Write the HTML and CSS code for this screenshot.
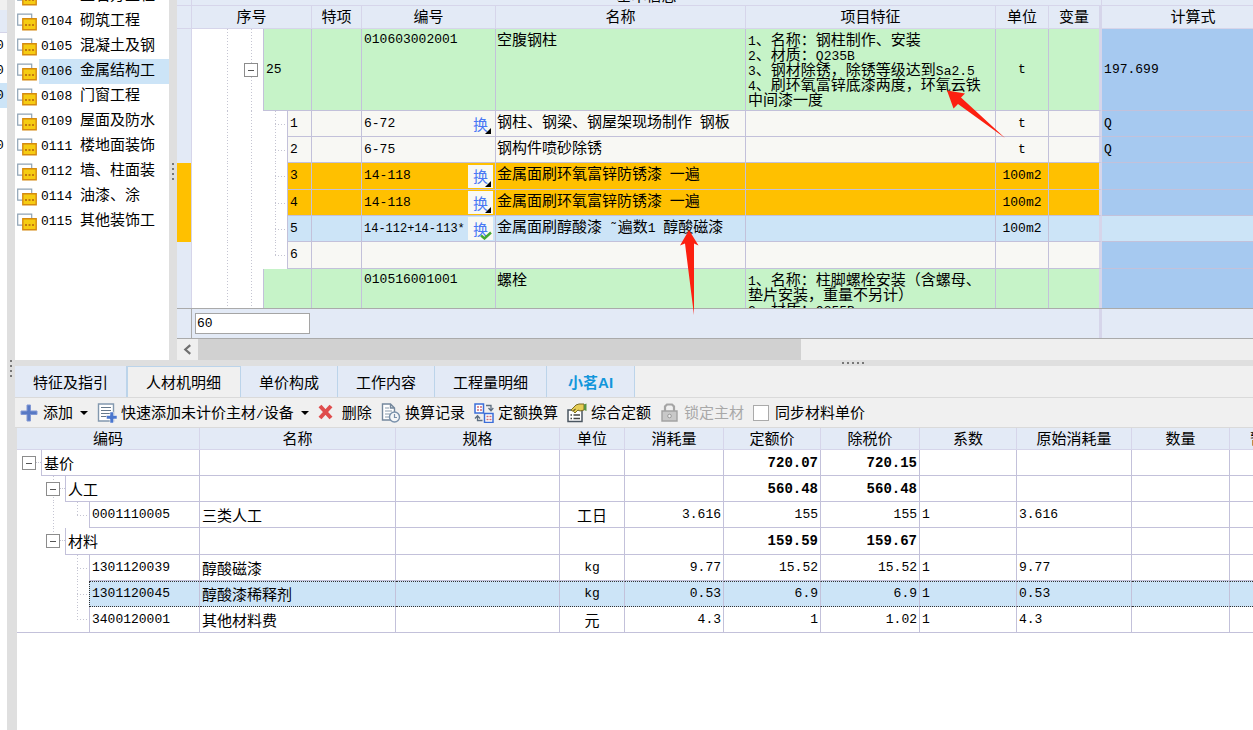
FILE: index.html
```html
<!DOCTYPE html>
<html lang="zh-CN">
<head>
<meta charset="utf-8">
<title>工程计价</title>
<link rel="stylesheet" href="styles.css">
</head>
<body>
<svg class="defs" aria-hidden="true">
  <symbol id="folder" viewBox="0 0 20 18">
    <path d="M.7 1.2h14v11h-14z" fill="#fff" stroke="#8fa3b5" stroke-width="1.2"/>
    <path d="M5.8 5.8h13.4v11H5.8z" fill="#f6cc12" stroke="#d58a10" stroke-width="1.4"/>
    <path d="M8 11h2v2H8zM11.500 11h2v2h-2zM15 11h2v2h-2z" fill="#c47a10"/>
  </symbol>
</svg>
<aside class="strip">
  <div class="strip-head"></div>
  <div class="strip-row">0</div>
  <div class="strip-row">0</div>
  <div class="strip-row on">0</div>
  <div class="strip-row"></div>
  <div class="strip-row">0</div>
</aside>
<div class="vsplit outer"><i></i><i></i><i></i><i></i></div>
<main class="main">
  <section class="top">
    <nav class="side">
      <ul>
        <li><svg><use href="#folder"/></svg><span><b>0101 </b>土石方工程</span></li>
        <li><svg><use href="#folder"/></svg><span><b>0104 </b>砌筑工程</span></li>
        <li><svg><use href="#folder"/></svg><span><b>0105 </b>混凝土及钢</span></li>
        <li class="on"><svg><use href="#folder"/></svg><span><b>0106 </b>金属结构工</span></li>
        <li><svg><use href="#folder"/></svg><span><b>0108 </b>门窗工程</span></li>
        <li><svg><use href="#folder"/></svg><span><b>0109 </b>屋面及防水</span></li>
        <li><svg><use href="#folder"/></svg><span><b>0111 </b>楼地面装饰</span></li>
        <li><svg><use href="#folder"/></svg><span><b>0112 </b>墙、柱面装</span></li>
        <li><svg><use href="#folder"/></svg><span><b>0114 </b>油漆、涂</span></li>
        <li><svg><use href="#folder"/></svg><span><b>0115 </b>其他装饰工</span></li>
      </ul>
    </nav>
    <div class="vsplit"><i></i><i></i><i></i><i></i></div>
    <div class="grid">
      <div class="grid-view">
        <table class="items">
          <colgroup><col class="c-ind"><col class="c-no"><col class="c-sp"><col class="c-code"><col class="c-name"><col class="c-feat"><col class="c-unit"><col class="c-var"><col class="c-calc"></colgroup>
          <thead>
            <tr class="group"><th></th><th colspan="7"><span>基本信息</span></th><th></th></tr>
            <tr><th></th><th>序号</th><th>特项</th><th>编号</th><th>名称</th><th>项目特征</th><th>单位</th><th>变量</th><th>计算式</th></tr>
          </thead>
          <tbody>
            <tr class="parent">
              <td class="ind"></td>
              <td class="tree"><div><i class="g1"></i><i class="g2"><button class="toggle" aria-label="折叠"></button></i><span class="no">25</span></div></td>
              <td></td><td class="code">010603002001</td><td class="name">空腹钢柱</td>
              <td class="feat"><b>1</b>、名称：钢柱制作、安装<br><b>2</b>、材质：<b>Q235B</b><br><b>3</b>、钢材除锈，除锈等级达到<b>Sa2.5</b><br><b>4</b>、刷环氧富锌底漆两度，环氧云铁中间漆一度</td>
              <td class="unit">t</td><td></td><td class="calc">197.699</td>
            </tr>
            <tr>
              <td class="ind"></td><td class="tree"><div><i class="g1"></i><i class="g2"></i><i class="g3"></i><span class="no">1</span></div></td>
              <td></td><td class="code"><div><span>6-72</span><button class="swap">换</button></div></td><td class="name">钢柱、钢梁、钢屋架现场制作<b> </b>钢板</td><td></td><td class="unit">t</td><td></td><td class="calc">Q</td>
            </tr>
            <tr>
              <td class="ind"></td><td class="tree"><div><i class="g1"></i><i class="g2"></i><i class="g3"></i><span class="no">2</span></div></td>
              <td></td><td class="code"><div><span>6-75</span></div></td><td class="name">钢构件喷砂除锈</td><td></td><td class="unit">t</td><td></td><td class="calc">Q</td>
            </tr>
            <tr class="gold">
              <td class="ind"></td><td class="tree"><div><i class="g1"></i><i class="g2"></i><i class="g3"></i><span class="no">3</span></div></td>
              <td></td><td class="code"><div><span>14-118</span><button class="swap">换</button></div></td><td class="name">金属面刷环氧富锌防锈漆<b> </b>一遍</td><td></td><td class="unit">100m2</td><td></td><td class="calc"></td>
            </tr>
            <tr class="gold">
              <td class="ind"></td><td class="tree"><div><i class="g1"></i><i class="g2"></i><i class="g3"></i><span class="no">4</span></div></td>
              <td></td><td class="code"><div><span>14-118</span><button class="swap">换</button></div></td><td class="name">金属面刷环氧富锌防锈漆<b> </b>一遍</td><td></td><td class="unit">100m2</td><td></td><td class="calc"></td>
            </tr>
            <tr class="picked">
              <td class="ind mark"></td><td class="tree"><div><i class="g1"></i><i class="g2"></i><i class="g3"></i><span class="no">5</span></div></td>
              <td></td><td class="code"><div><span class="long">14-112+14-113*</span><button class="swap done">换<svg viewBox="0 0 12 9"><path d="M1 4.500l3.500 3L11 1.500" fill="none" stroke="#45a832" stroke-width="2.400"/></svg></button></div></td><td class="name">金属面刷醇酸漆<b> ˜</b>遍数<b>1 </b>醇酸磁漆</td><td></td><td class="unit">100m2</td><td></td><td class="calc"></td>
            </tr>
            <tr>
              <td class="ind"></td><td class="tree"><div><i class="g1"></i><i class="g2"></i><i class="g3 end"></i><span class="no">6</span></div></td>
              <td></td><td></td><td></td><td></td><td></td><td></td><td class="calc"></td>
            </tr>
            <tr class="parent">
              <td class="ind"></td>
              <td class="tree"><div><i class="g1"></i><i class="g2"></i><span class="no"></span></div></td>
              <td></td><td class="code">010516001001</td><td class="name">螺栓</td>
              <td class="feat"><b>1</b>、名称：柱脚螺栓安装（含螺母、垫片安装，重量不另计）<br><b>2</b>、材质：<b>Q355B</b></td>
              <td></td><td></td><td class="calc"></td>
            </tr>
          </tbody>
        </table>
      </div>
      <div class="summary"><div class="sum-ind"></div><div class="sum-main"><input type="text" value="60" aria-label="合计"></div><div class="sum-rest"></div></div>
      <div class="hbar"><button aria-label="向左滚动"><svg viewBox="0 0 10 10"><path d="M7.500 1L3 5l4.500 4" fill="none" stroke="#707070" stroke-width="2"/></svg></button><div class="thumb"></div></div>
    </div>
    <svg class="arrows" viewBox="0 0 1238 360" aria-hidden="true">
      <path d="M932 90.500L950 93.500L946 97.500L990 138L943 104L938.500 108.500z" fill="#fc2010"/>
      <path d="M674 230L683.500 245.500L679 243.500V315L670 243.500L665 245.500z" fill="#fc2010"/>
    </svg>
  </section>
  <div class="hsplit"><i></i><i></i><i></i><i></i><i></i></div>
  <section class="bottom">
    <div class="tabs" role="tablist">
      <button role="tab">特征及指引</button><button role="tab" class="on" aria-selected="true">人材机明细</button><button role="tab">单价构成</button><button role="tab">工作内容</button><button role="tab">工程量明细</button><button role="tab" class="ai">小茗AI</button>
    </div>
    <div class="tools">
      <button class="drop"><svg viewBox="0 0 20 20"><path d="M8 2h3.500v6H18v3.500h-6.500V18H8v-6.500H2V8h6z" fill="#5778c4" stroke="#8298d4"/></svg>添加</button>
      <button class="drop"><svg viewBox="0 0 20 20"><path d="M1.500 1h15v17h-15z" fill="#fff" stroke="#8298ae" stroke-width="1.400"/><path d="M4 4.500h10M4 7.500h10M4 10.500h9M4 13.500h6" stroke="#66798c" stroke-width="1.200"/><path d="M13 9h3.500v3.500H20V16h-3.500v4H13v-4H9.500v-3.500H13z" fill="#4a76ce" stroke="#fff" stroke-width=".5"/></svg><span>快速添加未计价主材<b>/</b>设备</span></button>
      <button><svg viewBox="0 0 20 20"><path d="M2 3l11 12M13 3L2 15" stroke="#df4d4d" stroke-width="4"/></svg>删除</button>
      <button><svg viewBox="0 0 20 20"><path d="M10 17H1.500V1h8l4 4v4M9.500 1v4h4" fill="#fff" stroke="#74889d" stroke-width="1.400"/><path d="M4 5h4M4 8h7M4 11h5M4 14h4" stroke="#8a9bac" stroke-width="1.200"/><circle cx="13.500" cy="14" r="5" fill="#f4f6f8" stroke="#7890aa" stroke-width="1.400"/><path d="M13.500 11v3.500H16" fill="none" stroke="#7890aa" stroke-width="1.200"/></svg>换算记录</button>
      <button><svg viewBox="0 0 20 20"><path d="M1 1h8.500v9H1zM10.500 10.500H19v9h-8.500z" fill="#fff" stroke="#3b6dd8" stroke-width="1.500"/><path d="M3 4h2M6 4h2M3 7h2M6 7h2M12.500 13.500h2m1 0h2m-5 3h2m1 0h2" stroke="#d06b75" stroke-width="1.300"/><path d="M12 2.500h5V7M14.500 5L17 7.800 19.300 5M8.500 17.500h-5v-4M1 15.500l2.500-2.800L6 15.500" fill="none" stroke="#5d6e80" stroke-width="1.300"/></svg>定额换算</button>
      <button><svg viewBox="0 0 20 20"><path d="M1 7h14v11.500H1z" fill="#fff" stroke="#4a5560" stroke-width="1.500"/><path d="M3.500 12H5M3.500 15.500H5M6.500 12H13M6.500 15.500H13" stroke="#444" stroke-width="1.300"/><path d="M4 7l5-5 3-1h5v6l-4 1-2-1-3 3-1.500-1.500 2-2.500-3 2z" fill="#e6cd55" stroke="#7b6d24"/><path d="M17 1.500l2.500-1V8L17 7z" fill="#5a9440"/></svg>综合定额</button>
      <button disabled><svg viewBox="0 0 20 20"><path d="M5 9V3.500L7 1.500h5l2 2V9" fill="none" stroke="#a5a5a5" stroke-width="2.200"/><path d="M2 8h15v10H2z" fill="#c8c8c8" stroke="#a2a2a2" stroke-width="1.400"/><circle cx="9.500" cy="13" r="1.800" fill="#eee" stroke="#999"/></svg>锁定主材</button>
      <label><input type="checkbox">同步材料单价</label>
    </div>
    <div class="detail-view">
      <table class="detail">
        <colgroup><col class="d1"><col class="d2"><col class="d3"><col class="d4"><col class="d5"><col class="d6"><col class="d7"><col class="d8"><col class="d9"><col class="d10"><col class="d11"></colgroup>
        <thead><tr><th>编码</th><th>名称</th><th>规格</th><th>单位</th><th>消耗量</th><th>定额价</th><th>除税价</th><th>系数</th><th>原始消耗量</th><th>数量</th><th>暂估</th></tr></thead>
        <tbody>
          <tr class="sum"><td class="tree"><div><i class="t1"><button class="toggle" aria-label="折叠"></button></i><span class="no zh">基价</span></div></td><td></td><td></td><td></td><td></td><td class="r">720.07</td><td class="r">720.15</td><td></td><td></td><td></td><td></td></tr>
          <tr class="sum"><td class="tree"><div><i class="t0"></i><i class="t1 line"><button class="toggle" aria-label="折叠"></button></i><span class="no zh">人工</span></div></td><td></td><td></td><td></td><td></td><td class="r">560.48</td><td class="r">560.48</td><td></td><td></td><td></td><td></td></tr>
          <tr><td class="tree"><div><i class="t2 cont"></i><i class="g3 end"></i><span class="no">0001110005</span></div></td><td class="zh">三类人工</td><td></td><td class="unit zh">工日</td><td class="r">3.616</td><td class="r">155</td><td class="r">155</td><td>1</td><td>3.616</td><td></td><td></td></tr>
          <tr class="sum"><td class="tree"><div><i class="t0"></i><i class="t1 line half"><button class="toggle" aria-label="折叠"></button></i><span class="no zh">材料</span></div></td><td></td><td></td><td></td><td></td><td class="r">159.59</td><td class="r">159.67</td><td></td><td></td><td></td><td></td></tr>
          <tr><td class="tree"><div><i class="t2"></i><i class="g3"></i><span class="no">1301120039</span></div></td><td class="zh">醇酸磁漆</td><td></td><td class="unit">kg</td><td class="r">9.77</td><td class="r">15.52</td><td class="r">15.52</td><td>1</td><td>9.77</td><td></td><td></td></tr>
          <tr class="picked"><td class="tree"><div><i class="t2"></i><i class="g3"></i><span class="no">1301120045</span></div></td><td class="zh">醇酸漆稀释剂</td><td></td><td class="unit">kg</td><td class="r">0.53</td><td class="r">6.9</td><td class="r">6.9</td><td>1</td><td>0.53</td><td></td><td></td></tr>
          <tr class="last"><td class="tree"><div><i class="t2"></i><i class="g3 end"></i><span class="no">3400120001</span></div></td><td class="zh">其他材料费</td><td></td><td class="unit zh">元</td><td class="r">4.3</td><td class="r">1</td><td class="r">1.02</td><td>1</td><td>4.3</td><td></td><td></td></tr>
        </tbody>
      </table>
    </div>
  </section>
</main>
</body>
</html>
```
FILE: styles.css
```css
* { box-sizing: border-box; }
body { margin: 0; height: 100vh; display: flex; overflow: hidden; background: #fff; color: #000; font: 15px/18px "Liberation Sans", "Noto Sans CJK SC", sans-serif; }
button { font: inherit; color: inherit; border: 0; margin: 0; padding: 0; background: none; }
b { font-family: "Liberation Mono", monospace; font-size: 13px; font-weight: 400; white-space: pre; line-height: 1px; }
svg { flex: none; display: block; }
.defs { display: none; }

/* left edge of the project list */
.strip { flex: 0 0 7px; overflow: hidden; font: 13px/25px "Liberation Mono", monospace; }
.strip-head { height: 33px; border-top: 10px solid #f0f0f0; background: #e3eaf6; border-bottom: 1px solid #d4d4e8; }
.strip-row { height: 25px; text-indent: -4px; }
.strip-row.on { background: #cce4f7; }

/* splitters */
.vsplit { flex: 0 0 8px; background: #dfdfdf; display: flex; flex-direction: column; align-items: center; gap: 3px; padding-top: 163px; }
.vsplit.outer { padding-top: 360px; }
.vsplit i, .hsplit i { width: 2px; height: 2px; background: #777; }
.hsplit { flex: 0 0 6px; background: #dfdfdf; display: flex; justify-content: center; align-items: center; gap: 3px; padding-left: 438px; }

.main { flex: 1; min-width: 0; display: flex; flex-direction: column; }
.top { position: relative; flex: 0 0 360px; display: flex; overflow: hidden; }
.arrows { position: absolute; left: 0; top: 0; width: 1238px; height: 360px; pointer-events: none; }

/* chapter list */
.side { flex: 0 0 154px; overflow: hidden; }
.side ul { list-style: none; margin: -16px 0 0; padding: 0; }
.side li { height: 25px; display: flex; align-items: center; gap: 2px; padding-left: 2px; }
.side li svg { width: 20px; height: 18px; }
.side li span { flex: 1; height: 25px; line-height: 22px; padding-left: 2px; white-space: nowrap; }
.side li.on span { background: #cce4f7; }

/* item grid */
.grid { flex: 1; min-width: 0; display: flex; flex-direction: column; }
.grid-view { flex: 1; min-height: 0; overflow: hidden; }
table { table-layout: fixed; border-collapse: separate; border-spacing: 0; }
th, td { padding: 0 2px; font-weight: 400; border-right: 1px solid #c3c1da; border-bottom: 1px solid #c3c1da; overflow: hidden; white-space: nowrap; }
th { background: #e3eaf6; border-color: #d6d5ea; text-align: center; height: 23px; }
td { text-align: left; height: 26px; font-family: "Liberation Mono", "Noto Sans CJK SC", monospace; font-size: 13px; }
.items { width: 1108px; }
.c-ind { width: 15px; } .c-no { width: 120px; } .c-sp { width: 50px; } .c-code { width: 134px; } .c-name { width: 250px; }
.c-feat { width: 250px; } .c-unit { width: 53px; } .c-var { width: 53px; } .c-calc { width: 183px; }
.items .group th { height: 6px; padding: 0; }
.group span { display: flex; align-items: flex-end; justify-content: center; height: 5px; }
.items th:nth-child(8), .items td:nth-child(8) { border-right: 3px solid #d6d5ea; }
.items td { background: #f8f8f4; }
.items tbody tr:nth-child(3n + 1) td { height: 27px; }
.items tbody tr.parent td { height: 82px; background: #c6f3c8; }
.items .gold td { background: #ffc000; }
.items .picked td { background: #cce4f7; }
.items tbody tr td.calc { background: #a6c9f0; }
.items tbody tr.picked td.calc { background: #cce4f7; }
.items tbody tr td.ind { background: #e3eaf6; border-bottom: 0; border-color: #d6d5ea; }
.items tbody tr.gold td.ind, .items tbody tr td.mark { background: #ffc000; }
td.name, td.feat { font-size: 15px; font-family: "Noto Sans CJK SC", sans-serif; }
td.name { vertical-align: top; padding: 1px 1px 0; }
td.feat { white-space: normal; line-height: 15px; padding-left: 2px; }
.items .parent .code, .items .parent .name, .items .parent .feat { vertical-align: top; padding-top: 3px; line-height: 15px; }
.items .parent .name, .items .parent .feat { padding-top: 2px; }
td.unit { text-align: center; }
td.code div { display: flex; align-items: center; justify-content: space-between; height: 24px; }
.long { font-size: 12px; }
.swap { position: relative; width: 25px; height: 23px; background: #f8f8f4; color: #4878f4; font: 15px/20px "Noto Sans CJK SC", sans-serif; }
.swap::after { content: ""; position: absolute; right: 2px; bottom: 1px; border: 3px solid #000; border-top-color: transparent; border-left-color: transparent; }
.swap.done::after { display: none; }
.swap svg { position: absolute; right: 1px; bottom: 0; width: 12px; height: 9px; }

/* tree cells */
.items tbody tr td.tree, td.tree { background: #fff; padding: 0; border-bottom: 0; }
.tree div { display: flex; height: 100%; min-height: 26px; }
.parent .tree div { height: 82px; }
.tree i { flex: none; position: relative; }
.g1 { width: 59px; background: repeating-linear-gradient(#c5c5d2 0 1px, transparent 1px 3px) 35px 0 / 1px 100% no-repeat; }
.g2 { width: 12px; background: repeating-linear-gradient(#c5c5d2 0 1px, transparent 1px 3px) 0 0 / 1px 100% no-repeat; }
.g2 .toggle { position: absolute; left: -7px; top: calc(50% - 7px); }
.g3 { width: 12px; background: repeating-linear-gradient(#c5c5d2 0 1px, transparent 1px 3px) 0 0 / 1px 100% no-repeat, repeating-linear-gradient(90deg, #c5c5d2 0 1px, transparent 1px 3px) 0 50% / 100% 1px no-repeat; }
.g3.end { background-size: 1px 50%, 100% 1px; }
.g2 + .g3 { margin-left: 12px; }
.no { flex: 1; display: flex; align-items: center; padding-left: 2px; border-left: 1px solid #c3c1da; border-bottom: 1px solid #c3c1da; background: #f8f8f4; }
.parent .no { background: #c6f3c8; } .gold .no { background: #ffc000; } .picked .no { background: #cce4f7; }
.toggle { display: grid; place-items: center; width: 14px; height: 14px; background: #fff; border: 1px solid #8c8c8c; }
.toggle::before { content: ""; width: 6px; height: 1px; background: #555; }

/* summary and scroll bar */
.summary { flex: 0 0 30px; display: flex; background: #e3eaf6; border: solid #aaa; border-width: 1px 0; }
.sum-ind { flex: 0 0 15px; border-right: 1px solid #aaa; }
.sum-main { flex: 0 0 910px; border-right: 3px solid #d6d5ea; padding: 4px 3px; }
.sum-main input { width: 115px; height: 21px; border: 1px solid #a5a5a5; padding: 0 1px; background: #fff; font: 13px "Liberation Mono", monospace; }
.hbar { flex: 0 0 21px; display: flex; background: #efefef; }
.hbar button { width: 21px; display: grid; place-items: center; }
.hbar svg { width: 11px; height: 11px; }
.thumb { width: 56%; background: #d1d1d1; }

/* detail panel */
.bottom { flex: 1; min-height: 0; display: flex; flex-direction: column; background: #fff; }
.tabs { flex: none; display: flex; background: #f0f0f0; border-bottom: 1px solid #dadada; }
.tabs button { height: 31px; padding: 2px 18px 0; background: #e3eaf6; border-right: 1px solid #bcd4ea; }
.tabs .on { background: #f0f0f0; border: 1px solid #bcd4ea; border-bottom: 0; padding: 1px 19px 0 18px; }
.tabs .ai { color: #1296db; font-weight: 700; padding: 2px 21px 0; }
.tools { flex: none; display: flex; align-items: center; height: 30px; background: #f0f0f0; border-bottom: 1px solid #dadada; padding-left: 4px; gap: 9px; }
.tools button, .tools label { display: flex; align-items: center; gap: 4px; white-space: nowrap; }
.tools label { gap: 6px; }
.tools svg { width: 20px; height: 20px; }
.tools button:disabled { color: #a8a8a8; }
.drop::after { content: ""; border: 4px solid transparent; border-top-color: #000; border-bottom: 0; margin-left: 3px; }
.tools input { appearance: none; width: 16px; height: 16px; margin: 0; border: 1px solid #aaa; background: #fff; }
.detail-view { flex: 1; min-height: 0; overflow: hidden; border-left: 2px solid #dfdfdf; }
.detail { width: 1284px; }
.d1 { width: 183px; } .d2 { width: 196px; } .d3 { width: 164px; } .d4 { width: 65px; } .d5 { width: 99px; } .d6 { width: 97px; }
.d7 { width: 99px; } .d8 { width: 97px; } .d9 { width: 115px; } .d10 { width: 98px; } .d11 { width: 71px; }
.detail th { height: 22px; }
.detail tbody tr:nth-child(4) td { height: 27px; }
.zh { font-size: 15px; font-family: "Noto Sans CJK SC", sans-serif; }
.detail .r { text-align: right; }
.sum .r { font-size: 14px; font-weight: 700; }
.detail .no { background: #fff; }
.detail .picked td { background: #cce4f7; border-top: 1px dotted #333; border-bottom: 1px dotted #333; }
.detail tr.picked td.tree { background: #fff; border-top: 0; border-bottom: 0; }
.detail .picked .no { background: #cce4f7; border: 1px dotted #333; border-right: 0; }
.detail tr.last td.tree { border-bottom: 1px solid #c3c1da; }
.detail .last .no { border-bottom: 0; }
.detail .last .tree div { min-height: 25px; }
.t0 { width: 24px; }
.t1 { width: 24px; }
.t1 .toggle { position: absolute; left: 5px; top: 6px; }
.t1::after { content: ""; position: absolute; left: 19px; right: 0; top: 12px; border-top: 1px dotted #c5c5d2; }
.line { background: repeating-linear-gradient(#c5c5d2 0 1px, transparent 1px 3px) 12px 0 / 1px 100% no-repeat; }
.line.half { background-size: 1px 50%; }
.t2 { width: 60px; }
.cont { background: repeating-linear-gradient(#c5c5d2 0 1px, transparent 1px 3px) 36px 0 / 1px 100% no-repeat; }
```
